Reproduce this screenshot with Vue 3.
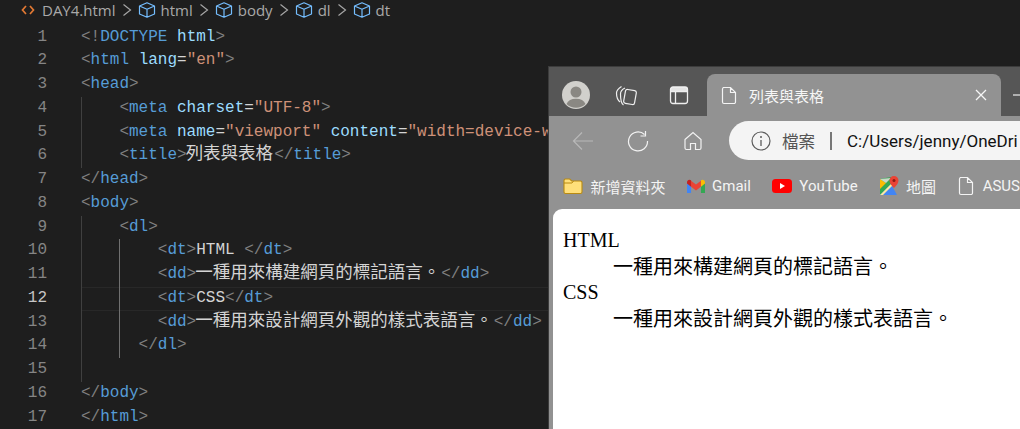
<script setup>
const T = { b: '#808080', t: '#569cd6', a: '#9cdcfe', s: '#ce9178', x: '#d4d4d4' }
const lines = [
  { ind: 0, toks: [['b', '<!'], ['t', 'DOCTYPE'], ['x', ' '], ['a', 'html'], ['b', '>']] },
  { ind: 0, toks: [['b', '<'], ['t', 'html'], ['x', ' '], ['a', 'lang'], ['x', '='], ['s', '"en"'], ['b', '>']] },
  { ind: 0, toks: [['b', '<'], ['t', 'head'], ['b', '>']] },
  { ind: 4, guides: [0], toks: [['b', '<'], ['t', 'meta'], ['x', ' '], ['a', 'charset'], ['x', '='], ['s', '"UTF-8"'], ['b', '>']] },
  { ind: 4, guides: [0], toks: [['b', '<'], ['t', 'meta'], ['x', ' '], ['a', 'name'], ['x', '='], ['s', '"viewport"'], ['x', ' '], ['a', 'content'], ['x', '='], ['s', '"width=device-wi']] },
  { ind: 4, guides: [0], toks: [['b', '<'], ['t', 'title'], ['b', '>'], ['c', '列表與表格'], ['b', '</'], ['t', 'title'], ['b', '>']] },
  { ind: 0, toks: [['b', '</'], ['t', 'head'], ['b', '>']] },
  { ind: 0, toks: [['b', '<'], ['t', 'body'], ['b', '>']] },
  { ind: 4, guides: [0], toks: [['b', '<'], ['t', 'dl'], ['b', '>']] },
  { ind: 8, guides: [0, 1], toks: [['b', '<'], ['t', 'dt'], ['b', '>'], ['x', 'HTML '], ['b', '</'], ['t', 'dt'], ['b', '>']] },
  { ind: 8, guides: [0, 1], toks: [['b', '<'], ['t', 'dd'], ['b', '>'], ['c', '一種用來構建網頁的標記語言。'], ['b', '</'], ['t', 'dd'], ['b', '>']] },
  { ind: 8, guides: [0, 1], cur: true, toks: [['b', '<'], ['t', 'dt'], ['b', '>'], ['x', 'CSS'], ['b', '</'], ['t', 'dt'], ['b', '>']] },
  { ind: 8, guides: [0, 1], toks: [['b', '<'], ['t', 'dd'], ['b', '>'], ['c', '一種用來設計網頁外觀的樣式表語言。'], ['b', '</'], ['t', 'dd'], ['b', '>']] },
  { ind: 6, guides: [0, 1], toks: [['b', '</'], ['t', 'dl'], ['b', '>']] },
  { ind: 0, guides: [0], toks: [] },
  { ind: 0, toks: [['b', '</'], ['t', 'body'], ['b', '>']] },
  { ind: 0, toks: [['b', '</'], ['t', 'html'], ['b', '>']] },
]
const crumbs = ['html', 'body', 'dl', 'dt']
</script>

<template>
  <div class="screen">
    <div class="editor">
      <div class="crumbs">
        <svg class="file-ic" viewBox="0 0 16 16" width="16" height="16"><path d="M6 4 2.500 8 6 12M10 4l3.500 4L10 12" fill="none" stroke="#e37933" stroke-width="1.700"/></svg>
        <span class="crumb-t">DAY4.html</span>
        <template v-for="c in crumbs" :key="c">
          <svg class="chev" viewBox="0 0 10 16" width="10" height="16"><path d="M1.500 2.500 8.500 8l-7 5.500" fill="none" stroke="#a6a6a6" stroke-width="1.200"/></svg>
          <svg class="cube" viewBox="0 0 18 18" width="18" height="18"><path d="M9 1.800 16.500 5v8L9 16.200 1.500 13V5ZM1.500 5 9 8.200 16.500 5M9 8.200v8" fill="none" stroke="#75beff" stroke-width="1.200" stroke-linejoin="round"/></svg>
          <span class="crumb-t">{{ c }}</span>
        </template>
      </div>
      <div class="code">
        <div v-for="(l, i) in lines" :key="i" class="row" :class="{ cur: l.cur }">
          <span class="num">{{ i + 1 }}</span>
          <div class="content">
            <i v-for="g in l.guides || []" :key="g" class="guide" :class="{ active: g === 1 }" :style="{ left: g * 38.4 + 'px' }"></i>
            <span class="pad" :style="{ width: l.ind * 9.6 + 'px' }"></span>
            <template v-for="(t, j) in l.toks" :key="j">
              <span v-if="t[0] === 'c'" class="cjk">{{ t[1] }}</span>
              <span v-else :style="{ color: T[t[0]] }">{{ t[1] }}</span>
            </template>
          </div>
        </div>
      </div>
    </div>

    <div class="win">
      <div class="strip">
        <div class="avatar">
          <svg viewBox="0 0 28 28" width="28" height="28"><circle cx="14" cy="14" r="14" fill="#d1d0cc"/><circle cx="14" cy="11" r="5.500" fill="#8a8883"/><path d="M4.500 23a10 7.500 0 0 1 19 0 14 14 0 0 1-19 0Z" fill="#8a8883"/></svg>
        </div>
        <svg class="s-ic col" viewBox="0 0 22 22" width="22" height="22"><g fill="none" stroke="#efefef" stroke-width="1.200"><rect x="9.500" y="5" width="11" height="14" rx="2" transform="rotate(10 15 12)"/><path d="M8.500 20C6 18.500 5.500 15 5.500 9 5.500 6 7 4.500 10 3M5 17C2.500 15 1.500 12 1.500 8 1.500 5 3.500 3.500 6.500 1.500"/></g></svg>
        <svg class="s-ic vert" viewBox="0 0 20 20" width="20" height="20"><path d="M4 2h12a2.500 2.500 0 0 1 2.500 2.500v2h-17v-2A2.500 2.500 0 0 1 4 2Z" fill="#e4e4e4"/><g fill="none" stroke="#efefef" stroke-width="1.300"><rect x="1.500" y="2" width="17" height="16.500" rx="2.500"/><path d="M1.500 6.500h17M6.500 6.500v12"/></g></svg>
        <div class="tab">
          <svg class="tab-f" viewBox="0 0 18 20" width="18" height="20"><path d="M3 2.500h7.500L15.500 7.500V17a1.500 1.500 0 0 1-1.500 1.500H4A1.500 1.500 0 0 1 2.500 17V4A1.500 1.500 0 0 1 4 2.500ZM10.500 2.500V7.500H15.500" fill="none" stroke="#f4f4f4" stroke-width="1.200"/></svg>
          <span class="tab-t">列表與表格</span>
          <svg class="tab-x" viewBox="0 0 12 12" width="12" height="12"><path d="M1 1l10 10M11 1 1 11" stroke="#f6f6f6" stroke-width="1.300"/></svg>
        </div>
        <svg class="plus" viewBox="0 0 12 12" width="12" height="12"><path d="M0 6h12" stroke="#eee" stroke-width="1.200"/></svg>
      </div>

      <div class="toolbar">
        <svg class="t-ic" viewBox="0 0 22 22" width="22" height="22"><path d="M21 11H1.500M10 2.500 1.500 11l8.500 8.500" fill="none" stroke="#b8b8b8" stroke-width="1.200"/></svg>
        <svg class="t-ic" viewBox="0 0 22 22" width="22" height="22"><path d="M17.500 4.500A9.500 9.500 0 1 0 20.500 11M18.500 1v5h-5" fill="none" stroke="#f2f2f2" stroke-width="1.200"/></svg>
        <svg class="t-ic" viewBox="0 0 22 22" width="22" height="22"><path d="M3 9.500 11 2.500l8 7V18a1.500 1.500 0 0 1-1.500 1.500h-4V13.500h-5v6h-4A1.500 1.500 0 0 1 3 18Z" fill="none" stroke="#f2f2f2" stroke-width="1.200"/></svg>
        <div class="addr">
          <svg class="t-ic" viewBox="0 0 20 20" width="20" height="20"><circle cx="10" cy="10" r="9" fill="none" stroke="#5c5c5c" stroke-width="1.200"/><path d="M10 9v6" stroke="#5c5c5c" stroke-width="1.300"/><circle cx="10" cy="6" r="1" fill="#5c5c5c"/></svg>
          <span class="lab">檔案</span>
          <i class="sep"></i>
          <span class="url">C:/Users/jenny/OneDri</span>
        </div>
      </div>

      <div class="marks">
        <span class="mark">
          <svg viewBox="0 0 20 18" width="20" height="18"><path d="M1 3.500A1.500 1.500 0 0 1 2.500 2h4.200l2 2h8.800A1.500 1.500 0 0 1 19 5.500V15a1.500 1.500 0 0 1-1.500 1.500h-15A1.500 1.500 0 0 1 1 15Z" fill="#ffdf7a" stroke="#b98a12" stroke-width="1.100"/><path d="M1 6h8l1.500-2" fill="none" stroke="#b98a12"/></svg>
          新增資料夾
        </span>
        <span class="mark">
          <svg viewBox="0 0 20 16" width="18" height="14.400"><path d="M0 3.500V14.500A1.300 1.300 0 0 0 1.300 16H4.500V8.500Z" fill="#4285f4"/><path d="M20 3.500V14.500A1.300 1.300 0 0 1 18.700 16H15.500V8.500Z" fill="#34a853"/><path d="M4.500 2 10 6.200 15.500 2V8.500L10 12.700 4.500 8.500Z" fill="#ea4335"/><path d="M0 3.500C0 1 2.800 0 4.500 1.500V8.500L0 5Z" fill="#c5221f"/><path d="M20 3.500C20 1 17.200 0 15.500 1.500V8.500L20 5Z" fill="#fbbc04"/></svg>
          Gmail
        </span>
        <span class="mark">
          <svg viewBox="0 0 20 14" width="20" height="14"><rect width="20" height="14" rx="3.500" fill="#f00"/><path d="M8 4v6l5-3Z" fill="#fff"/></svg>
          YouTube
        </span>
        <span class="mark">
          <svg viewBox="0 0 20 20" width="20" height="20"><path d="M1 3 12 1v17L1 19Z" fill="#34a853"/><path d="M1 19 12 8l6 11Z" fill="#4285f4"/><path d="M1 13 7 7 1 3Z" fill="#fbbc04"/><path d="M1 3l6 4 5-5Z" fill="#c8d8c8"/><path d="M1 19 15 5l1.500 1.500L4 19Z" fill="#fce8a0"/><path d="M15 0a4.500 4.500 0 0 1 4.500 4.500C19.500 8 15 12 15 12S10.500 8 10.500 4.500A4.500 4.500 0 0 1 15 0Z" fill="#ea4335"/><circle cx="15" cy="4.500" r="1.500" fill="#8c1c13"/></svg>
          地圖
        </span>
        <span class="mark">
          <svg viewBox="0 0 18 20" width="18" height="20"><path d="M3 1.500h7.500L15.500 6.500V17a1.500 1.500 0 0 1-1.500 1.500H4A1.500 1.500 0 0 1 2.500 17V3A1.500 1.500 0 0 1 4 1.500ZM10.500 1.500V6.500H15.500" fill="none" stroke="#f4f4f4" stroke-width="1.200"/></svg>
          ASUS
        </span>
      </div>

      <div class="page">
        <dl>
          <dt>HTML</dt>
          <dd>一種用來構建網頁的標記語言。</dd>
          <dt>CSS</dt>
          <dd>一種用來設計網頁外觀的樣式表語言。</dd>
        </dl>
      </div>
    </div>
  </div>
</template>

<style>
html, body { margin: 0; background: #1e1e1e; }
</style>

<style scoped>
.screen { position: relative; width: 1020px; height: 429px; overflow: hidden; background: #1e1e1e; }

.crumbs { height: 20px; padding-bottom: 2px; display: flex; align-items: center; padding-left: 20px; color: #a9a9a9; font: 15px "Open Sans", "Noto Sans", sans-serif; }
.file-ic { margin-right: 6px; }
.crumb-t { white-space: nowrap; }
.chev { margin: 0 6px; flex: none; }
.cube { margin-right: 5px; flex: none; }

.code { padding-top: 3.500px; }
.row { display: flex; height: 23.750px; font: 16px/23.750px "Liberation Mono", "Noto Sans CJK TC", monospace; color: #d4d4d4; white-space: pre; }
.num { width: 47px; text-align: right; color: #858585; flex: none; }
.content { position: relative; margin-left: 34px; flex: 1; min-width: 0; }
.pad { display: inline-block; }
.cjk { font: 17.500px/0 "Noto Sans CJK TC", sans-serif; color: #d4d4d4; margin-left: -1px; margin-right: 1px; }
.guide { position: absolute; top: 0; bottom: 0; width: 1px; background: #404040; }
.guide.active { background: #707070; }
.cur .num { color: #c6c6c6; }
.cur .content { box-shadow: inset 0 1px 0 #282828, inset 0 -1px 0 #282828; }

.win { position: absolute; left: 548px; top: 66px; width: 480px; height: 370px; background: #929292; border: 1px solid #3c3c3c; border-right: 0; box-sizing: border-box; display: flex; flex-direction: column; font-family: Roboto, "Noto Sans CJK TC", sans-serif; }
.strip { height: 49px; flex: none; background: #565656; display: flex; align-items: flex-end; position: relative; }
.avatar { position: absolute; left: 13px; top: 14px; line-height: 0; }
.s-ic { position: absolute; top: 18px; }
.col { left: 66px; }
.vert { left: 120px; }
.tab { margin-left: 158px; width: 294px; height: 42px; background: #929292; border-radius: 8px 8px 0 0; display: flex; align-items: center; padding: 0 14px 0 13px; box-sizing: border-box; color: #f6f6f6; flex: none; }
.tab-f { flex: none; }
.tab-t { margin-left: 11px; font-size: 15px; flex: 1; }
.plus { margin: 0 0 15px 12px; flex: none; }

.toolbar { height: 49px; flex: none; display: flex; align-items: center; padding-left: 23px; gap: 33px; }
.t-ic { flex: none; }
.addr { flex: none; width: 300px; margin-left: -8px; height: 39px; background: #f4f4f4; border-radius: 19.500px 0 0 19.500px; display: flex; align-items: center; padding-left: 22px; box-sizing: border-box; color: #111; white-space: nowrap; overflow: hidden; }
.lab { margin-left: 11px; color: #555; font-size: 16.500px; }
.sep { width: 2px; height: 18px; background: #777; margin: 0 15px; flex: none; }
.url { font-size: 17px; }

.marks { height: 44px; padding-bottom: 2px; box-sizing: border-box; flex: none; display: flex; align-items: center; padding-left: 14px; gap: 21px; color: #f4f4f4; font-size: 15px; white-space: nowrap; }
.mark { display: flex; align-items: center; gap: 7.500px; }

.page { flex: 1; margin-left: 4px; background: #fff; border-radius: 9px 0 0 0; overflow: hidden; color: #000; font: 20px/26px "Liberation Serif", "Noto Sans CJK TC", serif; }
dl { margin: 18px 0 0 10px; }
dd { margin: 0 0 -1px 50px; padding-top: 1px; }
</style>
